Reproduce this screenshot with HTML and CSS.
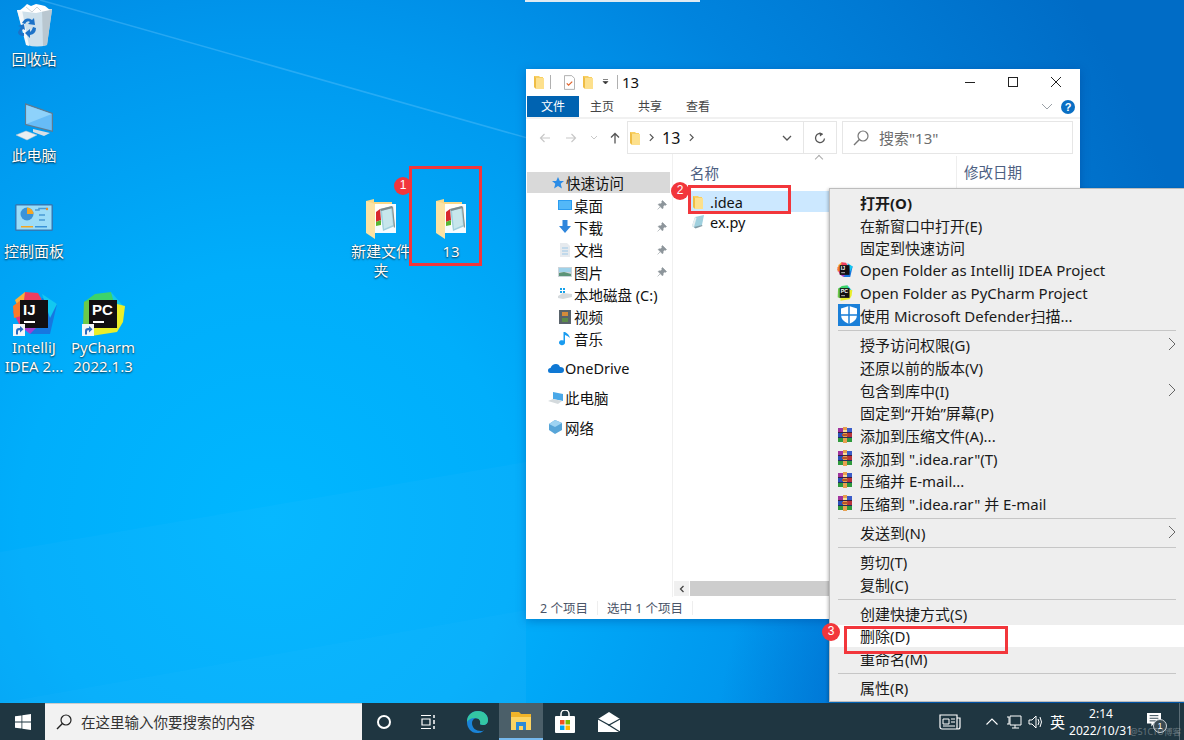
FILE: index.html
```html
<!DOCTYPE html>
<html lang="zh-CN">
<head>
<meta charset="utf-8">
<title>13</title>
<link rel="stylesheet" href="styles.css">
</head>
<body>
<svg class="defs" width="0" height="0" aria-hidden="true">
  <defs>
    <symbol id="folder" viewBox="0 0 10 14">
      <path d="M0 1h5l1 1h3v11H2l-2-1z" fill="#f8cf62"/>
      <path d="M2 3h8v11H2z" fill="#fde08c"/>
      <path d="M0 1l2 2v11l-2-2z" fill="#efbd45"/>
    </symbol>
    <symbol id="bigfolder" viewBox="0 0 30 40">
      <path d="M0 2l8-2v3h18v24H8L0 34z" fill="#f7d888"/>
      <path d="M0 2l9 3v35l-9-6z" fill="#fbe3a4"/>
      <path d="M9 5h21v29H9z" fill="#fff" opacity=".96"/>
      <path d="M14 10l12-3 3 20-12 5z" fill="#9fd0de"/>
      <path d="M16 12l9-3 2 17-9 4z" fill="#c7e6ec"/>
      <path d="M14 10l12-3 1 2-12 3z" fill="#7d8b8e"/>
      <path d="M27 7l2 21-1 1-2-20z" fill="#8a8f8b"/>
      <path d="M10 13l4-3 1 11-5 2z" fill="#d8262c"/>
      <path d="M10 23l5-2v5l-5 1z" fill="#58b432"/>
    </symbol>
    <symbol id="rar" viewBox="0 0 16 16">
      <rect x="1" y="1" width="14" height="4.500" fill="#a0329c"/>
      <rect x="9" y="1" width="6" height="4.500" fill="#3a5cc8"/>
      <rect x="1" y="6" width="14" height="4.500" fill="#2a50b8"/>
      <rect x="9" y="6" width="6" height="4.500" fill="#b8323a"/>
      <rect x="1" y="11" width="14" height="4" fill="#2f9a3c"/>
      <rect x="6" y="0" width="4" height="16" fill="#e8a050"/>
      <rect x="6" y="3" width="4" height="2" fill="#f6e09a"/>
      <rect x="5" y="7" width="6" height="2" fill="#b8542a"/>
      <rect x="1" y="5" width="14" height="1" fill="#3a2040"/>
      <rect x="1" y="10" width="14" height="1" fill="#22305a"/>
    </symbol>
    <symbol id="pin" viewBox="0 0 10 10">
      <path d="M5.500 .5l4 4-1 .8-.8-.4L6 6.500l.2 1.500-.8.8-4.200-4.200.8-.8 1.500.2L5.100 2.300l-.4-.8zM3 7L.6 9.400" fill="#8d959b" stroke="#8d959b" stroke-width=".6"/>
    </symbol>
    <symbol id="ij" viewBox="0 0 46 44">
      <path d="M1 20L10 8l20 0-8 32-14-6z" fill="#e8357b"/>
      <path d="M3 8L13 0l11 4-14 20z" fill="#fbb03b"/>
      <path d="M13 0l13 1 4 7H12z" fill="#ee3e5e"/>
      <path d="M1 14l8-6v16l-7 2z" fill="#fa7a2a"/>
      <path d="M30 6l15 6-7 30-20 0z" fill="#1777e0"/>
      <path d="M30 2l15 10-7 14z" fill="#12c8f0"/>
      <path d="M8 34l16 2-6 6z" fill="#a43fd0"/>
      <rect x="8" y="8" width="28" height="28" fill="#120f12"/>
      <rect x="12" y="29" width="11" height="2" fill="#fff"/>
      <text x="11" y="23" class="logo-text">IJ</text>
    </symbol>
    <symbol id="pc" viewBox="0 0 46 44">
      <path d="M3 10L14 2 30 0l4 10-24 10z" fill="#3dd36a"/>
      <path d="M2 34L3 10l7-2v30z" fill="#6cc94a"/>
      <path d="M30 0l14 16-8 6z" fill="#16c8e6"/>
      <path d="M36 12l8 2-2 16-6 10-26 4V34z" fill="#eaee2a"/>
      <rect x="8" y="8" width="28" height="28" fill="#120f12"/>
      <rect x="12" y="29" width="11" height="2" fill="#fff"/>
      <text x="11" y="23" class="logo-text">PC</text>
    </symbol>
    <symbol id="shortcut" viewBox="0 0 12 12">
      <rect width="12" height="12" fill="#f4f6f8"/>
      <path d="M3 10.500V7q0-3 3-3h1V2l3.500 3.300L7 8.500V6.300H6q-1 0-1 1.200v3z" fill="#2a6cc0"/>
    </symbol>
    <symbol id="chev" viewBox="0 0 8 14">
      <path d="M1 1l6 6-6 6" fill="none" stroke="#666" stroke-width="1"/>
    </symbol>
    <symbol id="mag" viewBox="0 0 16 16">
      <circle cx="10" cy="6" r="5" fill="none" stroke="currentColor" stroke-width="1.200"/>
      <path d="M6.400 9.600L1 15" stroke="currentColor" stroke-width="1.400"/>
    </symbol>
  </defs>
</svg>

<main class="desktop">
  <svg class="rays" viewBox="0 0 1184 703" preserveAspectRatio="none" aria-hidden="true">
    <path d="M40 0L1184 324" stroke="#7fd0ff" stroke-width="1.500" opacity=".3"/>
    <path d="M0 552L526 462V703H0z" fill="#fff" opacity=".025"/>
    <path d="M0 703L526 610V703z" fill="#fff" opacity=".02"/>
  </svg>
  <div class="topstrip"></div>

  <div class="dicon at-bin">
    <svg class="dsvg" viewBox="0 0 48 48">
      <path d="M7 8l35-1-5 36q-10 3-20 0z" fill="#dfe7ec" opacity=".92"/>
      <path d="M7 8l9 35 3 1L12 8z" fill="#f5f8fa"/>
      <path d="M32 8h10l-5 35-4 1z" fill="#b9c7d0"/>
      <path d="M9 9l5-4 3-3 4 2 5-2 5 1 4 1 5 4-14 3z" fill="#fff"/>
      <path d="M16 5l6 5 5-5 4 4" stroke="#cdd5da" fill="none"/>
      <g transform="translate(-6 -3)"><path d="M18 24q4-7 10-3l2-2 1 7-7-1 2-2q-3-2-5 2zM32 29q0 6-6 7v3l-5-5 5-4v3q2-1 3-5zM17 28l-3 5q0 4 6 4v-3q-3 0-3-1l2-3 2 1-1-6-6 2z" fill="#1c72c8"/></g>
    </svg>
    <span class="dlabel">回收站</span>
  </div>

  <div class="dicon at-pc">
    <svg class="dsvg" viewBox="0 0 48 48">
      <path d="M15 5l28 10v19l-28-7z" fill="#5d7b92"/>
      <path d="M16.200 7l25.600 9v16.500L16.200 26z" fill="#67bcf7"/>
      <path d="M16.200 7l25.600 9-25.600 10z" fill="#8ed2fb"/>
      <path d="M23 31l17 4-6 3-11-4z" fill="#d6dfe5"/>
      <path d="M6 37l10-4 11 4-10 5z" fill="#e9eef1" stroke="#bcc6cc" stroke-width=".5"/>
    </svg>
    <span class="dlabel">此电脑</span>
  </div>

  <div class="dicon at-cp">
    <svg class="dsvg" viewBox="0 0 48 48">
      <rect x="5" y="10" width="38" height="27" rx="1.500" fill="#2f7bb8"/>
      <rect x="6.500" y="11.500" width="35" height="24" fill="#9cdcf8"/>
      <circle cx="17" cy="20" r="6.500" fill="#3b93d8"/>
      <path d="M17 13.500a6.500 6.500 0 0 1 6.500 6.500H17z" fill="#f4a623"/>
      <rect x="11" y="32" width="12" height="1.500" fill="#f4a623"/>
      <rect x="25" y="32" width="12" height="1.500" fill="#3b93d8"/>
      <path d="M25 16h4v-1.500h9M29 21h6M29 26h6" stroke="#4a9ad4" stroke-width="1.500" fill="none"/>
      <circle cx="37" cy="15" r="1.200" fill="#f08a24"/>
    </svg>
    <span class="dlabel">控制面板</span>
  </div>

  <div class="dicon at-ij">
    <span class="dlogo">
      <svg class="dsvg"><use href="#ij" x="2" y="2" width="46" height="44"/></svg>
      <svg class="sc"><use href="#shortcut"/></svg>
    </span>
    <span class="dlabel">IntelliJ<br>IDEA 2...</span>
  </div>

  <div class="dicon at-py">
    <span class="dlogo">
      <svg class="dsvg"><use href="#pc" x="2" y="2" width="46" height="44"/></svg>
      <svg class="sc"><use href="#shortcut"/></svg>
    </span>
    <span class="dlabel">PyCharm<br>2022.1.3</span>
  </div>

  <div class="dicon at-new">
    <svg class="dsvg"><use href="#bigfolder" x="9" y="5" width="30" height="40"/></svg>
    <span class="dlabel">新建文件<br>夹</span>
  </div>

  <div class="dicon at-13">
    <svg class="dsvg"><use href="#bigfolder" x="9" y="5" width="30" height="40"/></svg>
    <span class="dlabel">13</span>
  </div>

  <section class="window">
    <header class="titlebar">
      <svg class="t-folder"><use href="#folder"/></svg>
      <i class="t-sep"></i>
      <svg class="t-note" viewBox="0 0 12 16"><path d="M.5.500h8l3 3v12H.5z" fill="#fff" stroke="#aaa"/><path d="M3 9l2 2 4-4" fill="none" stroke="#e0622a" stroke-width="1.300"/></svg>
      <svg class="t-folder t-folder2"><use href="#folder"/></svg>
      <svg class="t-drop" viewBox="0 0 7 6"><path d="M1 .5h5M1 2.500h5L3.500 5z" fill="#333" stroke="#333" stroke-width=".6"/></svg>
      <i class="t-sep t-sep2"></i>
      <span class="t-name">13</span>
      <div class="wctl">
        <svg viewBox="0 0 12 12"><path d="M1 6.500h10" stroke="#222"/></svg>
        <svg viewBox="0 0 12 12"><rect x="1.500" y="1.500" width="9" height="9" fill="none" stroke="#222"/></svg>
        <svg viewBox="0 0 12 12"><path d="M1 1l10 10M11 1L1 11" stroke="#222"/></svg>
      </div>
    </header>

    <nav class="ribbon">
      <span class="tab tab-file">文件</span>
      <span class="tab">主页</span>
      <span class="tab">共享</span>
      <span class="tab">查看</span>
      <svg class="rb-chev" viewBox="0 0 12 7"><path d="M1 1l5 5 5-5" fill="none" stroke="#9aa0a6"/></svg>
      <span class="help">?</span>
    </nav>

    <div class="addr">
      <svg class="a-btn" viewBox="0 0 12 12"><path d="M11 6H1.500M5.500 2l-4 4 4 4" fill="none" stroke="#c8c8c8" stroke-width="1.200"/></svg>
      <svg class="a-btn" viewBox="0 0 12 12"><path d="M1 6h9.500M6.500 2l4 4-4 4" fill="none" stroke="#c8c8c8" stroke-width="1.200"/></svg>
      <svg class="a-down" viewBox="0 0 8 5"><path d="M1 1l3 3 3-3" fill="none" stroke="#c8c8c8"/></svg>
      <svg class="a-up" viewBox="0 0 12 12"><path d="M6 11.500V1.500M2 5.500l4-4 4 4" fill="none" stroke="#555" stroke-width="1.300"/></svg>
      <div class="pathbox">
        <svg class="p-folder"><use href="#folder"/></svg>
        <svg class="p-gt" viewBox="0 0 6 10"><path d="M1 1l4 4-4 4" fill="none" stroke="#555" stroke-width="1.400"/></svg>
        <span class="p-name">13</span>
        <svg class="p-gt" viewBox="0 0 6 10"><path d="M1 1l4 4-4 4" fill="none" stroke="#555" stroke-width="1.400"/></svg>
        <svg class="p-chev" viewBox="0 0 10 6"><path d="M1 1l4 4 4-4" fill="none" stroke="#555" stroke-width="1.300"/></svg>
        <span class="p-refresh">
          <svg viewBox="0 0 14 14"><path d="M11.500 7.500a4.500 4.500 0 1 1-2-4.200" fill="none" stroke="#555" stroke-width="1.300"/><path d="M6.500 1l3.500 2.300L7 5.500z" fill="#555"/></svg>
        </span>
      </div>
      <div class="searchbox">
        <svg class="s-mag"><use href="#mag"/></svg>
        <span>搜索"13"</span>
      </div>
    </div>

    <div class="content">
      <aside class="navpane">
        <div class="nrow top active">
          <svg class="ni" viewBox="0 0 14 14"><path d="M7 1l1.800 4h4.200l-3.300 2.800 1.200 4.700L7 10l-3.900 2.500 1.200-4.700L1 5h4.200z" fill="#2b8ce6"/></svg>
          <span>快速访问</span>
        </div>
        <div class="nrow">
          <svg class="ni" viewBox="0 0 14 14"><rect x="0" y="2" width="14" height="10" fill="#2b9cf0"/><rect x="1" y="3" width="12" height="8" fill="#53b8f8"/></svg>
          <span>桌面</span><svg class="npin"><use href="#pin"/></svg>
        </div>
        <div class="nrow">
          <svg class="ni" viewBox="0 0 14 14"><path d="M4.500 0h5v6H13l-6 7-6-7h3.500z" fill="#2f86dc"/></svg>
          <span>下载</span><svg class="npin"><use href="#pin"/></svg>
        </div>
        <div class="nrow">
          <svg class="ni" viewBox="0 0 14 14"><path d="M2 0h7l3 3v11H2z" fill="#e6eaee"/><path d="M4 5h6M4 8h6M4 11h6" stroke="#9cc8e8"/></svg>
          <span>文档</span><svg class="npin"><use href="#pin"/></svg>
        </div>
        <div class="nrow">
          <svg class="ni" viewBox="0 0 14 14"><rect y="2" width="14" height="10" fill="#cbd4da"/><rect x="1" y="3" width="12" height="4" fill="#9fd2ea"/><path d="M1 11V8l5-1 7 2v2z" fill="#5c9478"/></svg>
          <span>图片</span><svg class="npin"><use href="#pin"/></svg>
        </div>
        <div class="nrow">
          <svg class="ni" viewBox="0 0 14 14"><path d="M0 9l5-3 9 1v3l-9 2-5-1z" fill="#d5dadd"/><path d="M2 1h2v2H2zM5 1h2v2H5zM2 4h2v2H2zM5 4h2v2H5z" fill="#16a1ea"/></svg>
          <span>本地磁盘 (C:)</span>
        </div>
        <div class="nrow">
          <svg class="ni" viewBox="0 0 14 14"><rect x="1" y="0" width="12" height="14" fill="#59636b"/><rect x="4" y="2" width="6" height="4" fill="#d58b3a"/><rect x="4" y="8" width="6" height="4" fill="#5c8c4a"/></svg>
          <span>视频</span>
        </div>
        <div class="nrow">
          <svg class="ni" viewBox="0 0 14 14"><path d="M7 0v10.500a3 2.500 0 1 1-1.500-2V0zM7 0q4 2 5 6-2-2-5-3z" fill="#1a9cf0"/></svg>
          <span>音乐</span>
        </div>
        <div class="nrow top group">
          <svg class="ni wide" viewBox="0 0 16 10"><path d="M2.500 10a2.500 2.500 0 0 1 0-5Q4 1 8 1q3 0 4 3 4 0 4 3t-3 3z" fill="#0f78d4"/></svg>
          <span>OneDrive</span>
        </div>
        <div class="nrow top group">
          <svg class="ni wide" viewBox="0 0 16 12"><path d="M5 0l10 2v7L5 7z" fill="#4aa8e8"/><path d="M0 9l5-2 9 2-4 3z" fill="#d4dadd"/></svg>
          <span>此电脑</span>
        </div>
        <div class="nrow top group">
          <svg class="ni wide" viewBox="0 0 16 14"><path d="M7 0l7 3v7l-7 4-6-4V4z" fill="#57a5d8"/><path d="M7 0l7 3-7 4-6-3z" fill="#9ed3f2"/></svg>
          <span>网络</span>
        </div>
      </aside>

      <div class="files">
        <div class="sortcaret"></div>
        <div class="fhead">
          <span class="c-name">名称</span>
          <span class="c-date">修改日期</span>
        </div>
        <div class="frow selected">
          <svg class="fi"><use href="#folder"/></svg>
          <span>.idea</span>
        </div>
        <div class="frow">
          <svg class="fi pyfile" viewBox="0 0 14 14"><path d="M1 11l3-9 9-2-2 10-7 3z" fill="#9fd0de"/><path d="M1 11l3-9 1.500 1L3 12z" fill="#e8eef0"/><path d="M3 12l8-2 .5 1-7 2.500z" fill="#7f9aa4"/></svg>
          <span>ex.py</span>
        </div>
        <div class="hscroll">
          <span class="hs-btn">
            <svg viewBox="0 0 6 8"><path d="M4.500 1L1.500 4l3 3" fill="none" stroke="#444" stroke-width="1.300"/></svg>
          </span>
          <span class="hs-thumb"></span>
        </div>
      </div>
    </div>

    <footer class="status">
      <span>2 个项目</span><i></i><span>选中 1 个项目</span><i></i>
    </footer>
  </section>

  <ul class="menu">
    <li class="mi bold">打开(O)</li>
    <li class="mi">在新窗口中打开(E)</li>
    <li class="mi">固定到快速访问</li>
    <li class="mi"><svg class="mic"><use href="#ij"/></svg>Open Folder as IntelliJ IDEA Project</li>
    <li class="mi"><svg class="mic"><use href="#pc"/></svg>Open Folder as PyCharm Project</li>
    <li class="mi"><svg class="mic-def" viewBox="0 0 22 22"><rect width="22" height="22" fill="#1a7fd8"/><path d="M11 2l8 2.500V11q0 6-8 9-8-3-8-9V4.500z" fill="#fff"/><path d="M11 2v18M3 11h16" stroke="#1a7fd8" stroke-width="1.500"/></svg>使用 Microsoft Defender扫描...</li>
    <li class="sep"></li>
    <li class="mi">授予访问权限(G)<svg class="arrow"><use href="#chev"/></svg></li>
    <li class="mi">还原以前的版本(V)</li>
    <li class="mi">包含到库中(I)<svg class="arrow"><use href="#chev"/></svg></li>
    <li class="mi">固定到“开始”屏幕(P)</li>
    <li class="mi"><svg class="mic"><use href="#rar"/></svg>添加到压缩文件(A)...</li>
    <li class="mi"><svg class="mic"><use href="#rar"/></svg>添加到 ".idea.rar"(T)</li>
    <li class="mi"><svg class="mic"><use href="#rar"/></svg>压缩并 E-mail...</li>
    <li class="mi"><svg class="mic"><use href="#rar"/></svg>压缩到 ".idea.rar" 并 E-mail</li>
    <li class="sep"></li>
    <li class="mi">发送到(N)<svg class="arrow"><use href="#chev"/></svg></li>
    <li class="sep"></li>
    <li class="mi">剪切(T)</li>
    <li class="mi">复制(C)</li>
    <li class="sep"></li>
    <li class="mi">创建快捷方式(S)</li>
    <li class="mi hover">删除(D)</li>
    <li class="mi">重命名(M)</li>
    <li class="sep"></li>
    <li class="mi">属性(R)</li>
  </ul>

  <div class="redbox box1"></div>
  <div class="redbox box2"></div>
  <div class="redbox box3"></div>
  <span class="badge b1">1</span>
  <span class="badge b2">2</span>
  <span class="badge b3">3</span>
</main>

<footer class="taskbar">
  <span class="start">
    <svg viewBox="0 0 16 16"><path d="M0 2.300l6.500-.9v6.200H0zM7.300 1.300L16 0v7.600H7.300zM0 8.400h6.500v6.200L0 13.700zM7.300 8.400H16V16l-8.700-1.300z" fill="#fff"/></svg>
  </span>
  <div class="tsearch">
    <svg class="ts-mag"><use href="#mag"/></svg>
    <span>在这里输入你要搜索的内容</span>
  </div>
  <span class="tbtn"><svg viewBox="0 0 16 16"><circle cx="8" cy="8" r="6" fill="none" stroke="#fff" stroke-width="2"/></svg></span>
  <span class="tbtn"><svg viewBox="0 0 16 16"><path d="M1 1.500h10M1 14.500h10M2 5h8v6H2z" fill="none" stroke="#fff" stroke-width="1.200"/><path d="M14 1v3M14 6v4M14 12v3" stroke="#fff" stroke-width="1.500"/></svg></span>
  <span class="tbtn edge"><svg class="big" viewBox="0 0 24 24">
    <path d="M2 12C2 5 7 1 13 1c6 0 10 4 10 9 0 3-2 5-5 5-2 0-3-1-3-1 1-1 1-4-1-5-3-2-7 0-7 4 0 5 4 8 9 8 1 0 2 0 3-1-2 3-5 3-7 3C6 23 2 18 2 12z" fill="#1a84d8"/>
    <path d="M2 12C2 5 7 1 13 1c6 0 10 4 10 9 0 3-2 5-5 5-2 0-3-1-3-1 1-3-1-6-5-6-4 0-7 2-8 4z" fill="#34c7a4"/>
  </svg></span>
  <span class="tbtn active"><svg class="big" viewBox="0 0 24 24">
    <path d="M2 3h8l2 2h10v16H2z" fill="#f0b429"/><path d="M2 8h20v13H2z" fill="#fcd462"/><path d="M7 13h10v8h-3v-4h-4v4H7z" fill="#2a8ad8"/>
  </svg></span>
  <span class="tbtn"><svg class="big" viewBox="0 0 24 24">
    <path d="M8 6V4a4 4 0 0 1 8 0v2" fill="none" stroke="#fff" stroke-width="1.500"/><rect x="2" y="6" width="20" height="17" rx="1" fill="#fff"/>
    <rect x="7" y="10" width="4.500" height="4.500" fill="#f25022"/><rect x="12.500" y="10" width="4.500" height="4.500" fill="#7fba00"/><rect x="7" y="15.500" width="4.500" height="4.500" fill="#00a4ef"/><rect x="12.500" y="15.500" width="4.500" height="4.500" fill="#ffb900"/>
  </svg></span>
  <span class="tbtn"><svg class="big" viewBox="0 0 24 24">
    <path d="M1 9l11-7 11 7v13H1z" fill="#fff"/><path d="M1 9l11 6 11-6" fill="none" stroke="#1e3540" stroke-width="1.300"/><path d="M23 22L11 14.500" stroke="#1e3540" stroke-width="1.300"/>
  </svg></span>

  <div class="tray">
    <span class="tr tr-news"><svg viewBox="0 0 22 16"><path d="M1 1h17v14H3a2 2 0 0 1-2-2zM18 4h3v9a2 2 0 0 1-2 2h-1" fill="none" stroke="#fff" stroke-width="1.200"/><path d="M4 5h6v5H4zM12 5h4M12 8h4M4 12h12" fill="none" stroke="#fff"/></svg></span>
    <span class="tr tr-s"><svg viewBox="0 0 12 7"><path d="M.5 6.500L6 1l5.500 5.500" fill="none" stroke="#fff" stroke-width="1.100"/></svg></span>
    <span class="tr tr-i"><svg viewBox="0 0 16 16"><path d="M4 2h11v9H4zM9 11v3M6 14h7M1 3h2v7H1" fill="none" stroke="#fff"/></svg></span>
    <span class="tr tr-i"><svg viewBox="0 0 16 16"><path d="M1 6h3l4-4v12l-4-4H1z" fill="none" stroke="#fff"/><path d="M10 5q2 3 0 6M12 3q3 5 0 10" fill="none" stroke="#fff"/></svg></span>
    <span class="tr tr-lang">英</span>
    <div class="clock"><span>2:14</span><span>2022/10/31</span></div>
    <span class="tr tr-notif">
      <svg viewBox="0 0 16 16"><path d="M0 0h16v12H8l-3 3.500V12H0z" fill="#fff"/><path d="M3 3h10M3 6h10M3 9h7" stroke="#1e3540"/></svg>
      <b class="ncount">1</b>
    </span>
    <i class="showdesk"></i>
  </div>
  <span class="watermark">@51CTO博客</span>
</footer>
</body>
</html>
```

FILE: styles.css
```css
* { box-sizing: border-box; }
html, body { margin: 0; height: 100%; }
body {
  width: 1184px; height: 740px; overflow: hidden;
  display: flex; flex-direction: column;
  font-family: "Noto Sans", "Noto Sans CJK SC", sans-serif;
  font-size: 15px; color: #1a1a1a;
}
.defs { position: absolute; }
.logo-text { font: 700 15px "Liberation Sans", sans-serif; fill: #fff; }

.desktop {
  flex: 1; position: relative; overflow: hidden;
  background:
    radial-gradient(circle 280px at 1000px 720px, rgba(0,72,180,.6) 0, rgba(0,72,180,.4) 45%, rgba(0,72,180,0) 100%),
    radial-gradient(circle 960px at 270px 520px, #00b7ff 0, #00aefb 26%, #0098ee 50%, #0084de 68%, #006cc6 100%);
}
.rays { position: absolute; inset: 0; width: 100%; height: 100%; }
.topstrip { position: absolute; left: 525px; top: 0; width: 175px; height: 2px; background: #dfeaf2; }

.dicon {
  position: absolute; width: 68px;
  display: flex; flex-direction: column; align-items: center;
  color: #fff; text-align: center;
}
.dsvg { width: 48px; height: 48px; display: block; }
.dlabel {
  line-height: 19px; font-size: 15px; white-space: nowrap;
  text-shadow: 0 1px 2px rgba(0,0,0,.7), 0 0 1px rgba(0,0,0,.4);
}
.dlogo { position: relative; width: 48px; height: 48px; }
.sc { position: absolute; left: 3px; bottom: 2px; width: 12px; height: 12px; }
.at-bin { left: 0; top: 2px; }
.at-pc { left: 0; top: 98px; }
.at-cp { left: 0; top: 194px; }
.at-ij { left: 0; top: 290px; }
.at-py { left: 69px; top: 290px; }
.at-new { left: 347px; top: 194px; }
.at-13 { left: 417px; top: 194px; }

.window {
  position: absolute; left: 526px; top: 69px; width: 554px; height: 550px;
  background: #fff; display: flex; flex-direction: column;
  box-shadow: 0 2px 9px rgba(0,50,130,.35);
}
.titlebar { height: 27px; padding-bottom: 1px; display: flex; align-items: center; flex: none; }
.t-folder { width: 10px; height: 14px; margin-left: 8px; }
.t-folder2 { margin-left: 8px; }
.t-sep { width: 1px; height: 14px; background: #b0b0b0; margin-left: 6px; }
.t-sep2 { margin-left: 8px; }
.t-note { width: 11px; height: 15px; margin-left: 13px; }
.t-drop { width: 7px; height: 6px; margin-left: 9px; }
.t-name { margin-left: 4px; font-size: 15px; color: #111; }
.wctl { margin-left: auto; display: flex; }
.wctl svg { width: 12px; height: 12px; margin: 0 15.500px; }
.wctl svg:last-child { margin-right: 18px; }

.ribbon {
  height: 23px; flex: none; display: flex; align-items: center;
  padding-left: 1px; border-bottom: 2px solid #f1f1f1; font-size: 12px; color: #444;
}
.tab { width: 48px; text-align: center; line-height: 23px; }
.tab-file { width: 52px; height: 21px; line-height: 21px; background: #0063b1; color: #fff; margin-right: -1px; }
.ribbon .rb-chev { width: 12px; height: 7px; margin-left: auto; }
.help {
  width: 14px; height: 14px; border-radius: 50%; background: #0a6fc4; color: #fff;
  font: 700 11px/14px "Liberation Sans", sans-serif; text-align: center;
  margin: 0 5px 0 8px;
}

.addr { height: 33px; margin-top: 2px; flex: none; display: flex; align-items: center; padding-left: 13px; }
.a-btn { width: 12px; height: 12px; margin-right: 14px; }
.a-down { width: 8px; height: 5px; margin-right: 11px; margin-left: -1px; }
.a-up { width: 12px; height: 12px; margin-right: 6px; }
.pathbox {
  width: 210px; height: 33px; border: 1px solid #e6e6e6; display: flex; align-items: center;
  font-size: 16px; color: #111;
}
.p-folder { width: 10px; height: 14px; margin-left: 2px; }
.p-gt { width: 5px; height: 9px; margin: 0 8.500px; flex: none; }
.p-name { line-height: 1; }
.p-chev { width: 10px; height: 6px; margin-left: auto; margin-right: 11px; }
.p-refresh {
  width: 33px; height: 31px; border-left: 1px solid #e6e6e6;
  display: flex; align-items: center; justify-content: center;
}
.p-refresh svg { width: 14px; height: 14px; }
.searchbox {
  width: 231px; height: 33px; margin-left: 5px; border: 1px solid #e6e6e6;
  display: flex; align-items: center; color: #6d6d6d; font-size: 15px;
}
.s-mag { width: 16px; height: 16px; margin: 0 10px 0 10px; color: #777; }

.content { flex: 1; display: flex; min-height: 0; }
.navpane { width: 147px; flex: none; padding: 18px 2px 0 1px; border-right: 1px solid #f0f0f0; }
.nrow { height: 22.300px; display: flex; align-items: center; padding-left: 32px; font-size: 14.500px; color: #111; }
.nrow.top { padding-left: 25px; }
.nrow.active { background: #d9d9d9; height: 21px; margin-bottom: 1px; }
.nrow.group { margin-top: 7.200px; padding-left: 22px; }
.ni { width: 14px; height: 14px; margin-right: 2px; margin-left: -1px; flex: none; }
.nrow.top .ni { margin-right: 1px; }
.ni.wide { width: 16px; margin-right: 4px; }
.npin { width: 10px; height: 10px; margin-left: auto; margin-right: 3px; }

.files { flex: 1; position: relative; display: flex; flex-direction: column; }
.fhead { height: 37px; flex: none; display: flex; align-items: center; color: #4d6082; font-size: 14.500px; padding-left: 17px; }
.c-date { margin-left: 237px; padding-left: 7px; border-left: 1px solid #eee; line-height: 33px; }
.sortcaret {
  position: absolute; left: 143px; top: 2px; width: 6px; height: 6px;
  border-left: 1px solid #aaa; border-top: 1px solid #aaa; transform: rotate(45deg);
}
.frow { height: 20px; flex: none; display: flex; align-items: center; padding-left: 18px; font-size: 14.500px; color: #111; }
.selected { height: 21px; background: #cce8ff; margin-left: 16px; padding-left: 4px; }
.fi { width: 10px; height: 14px; margin-right: 7px; flex: none; }
.pyfile { width: 14px; height: 14px; margin-right: 5px; }
.hscroll { margin-top: auto; margin-bottom: 1px; height: 15px; display: flex; margin-left: 1px; }
.hs-btn { width: 15px; background: #f0f0f0; display: flex; align-items: center; justify-content: center; }
.hs-btn svg { width: 6px; height: 8px; }
.hs-thumb { flex: 1; background: #cdcdcd; margin-left: 1px; }

.status { height: 22px; flex: none; display: flex; align-items: center; padding: 0 0 1px 14px; font-size: 12.500px; color: #4a5568; }
.status i { width: 1px; height: 14px; background: #eee; margin: 0 9px; }

.menu {
  list-style: none; margin: 0; padding: 2px 0 0;
  position: absolute; left: 829px; top: 188px; width: 355px; height: 514px;
  background: #eee; border: 1px solid #bdbdbd; border-right: 0;
  box-shadow: -1px 1px 3px rgba(0,0,0,.25);
}
.mi {
  height: 22.680px; display: flex; align-items: center; padding-left: 30px;
  position: relative; font-size: 15px; color: #1a1a1a; white-space: pre;
}
.bold { font-weight: 700; }
.hover { background: #fff; }
.sep { height: 6.400px; margin: 0 8px; position: relative; }
.sep::after { content: ""; display: block; position: relative; top: 3px; height: 1px; background: #c6c6c6; }
.mic { position: absolute; left: 7px; top: 3px; width: 16px; height: 16px; }
.mic-def { position: absolute; left: 8px; top: 0; width: 22px; height: 22px; }
.arrow { position: absolute; right: 8px; top: 4px; width: 8px; height: 14px; }

.redbox { position: absolute; border: 3px solid #f2363b; }
.box1 { left: 409px; top: 166px; width: 73px; height: 100px; }
.box2 { left: 688px; top: 185px; width: 103px; height: 29px; }
.box3 { left: 844px; top: 626px; width: 164px; height: 28px; }
.badge {
  position: absolute; width: 18px; height: 18px; border-radius: 50%;
  background: #f2363b; color: #fff; font: 400 12px/17px "Liberation Sans", sans-serif; text-align: center;
}
.b1 { left: 394px; top: 177px; }
.b2 { left: 671px; top: 182px; }
.b3 { left: 822px; top: 623px; }

.taskbar {
  height: 37px; flex: none; display: flex; align-items: stretch; position: relative;
  background: #1f3641; color: #fff;
}
.start { width: 45px; display: flex; align-items: center; justify-content: center; }
.start svg { width: 16px; height: 16px; }
.tsearch {
  width: 317px; background: #f2f2f2; color: #333; display: flex; align-items: center;
  font-size: 14.500px; padding: 0 0 1px 11px; border-top: 1px solid #ccc;
}
.ts-mag { width: 16px; height: 16px; margin-right: 9px; color: #222; }
.tbtn { width: 44px; display: flex; align-items: center; justify-content: center; }
.tbtn svg { width: 16px; height: 16px; }
.tbtn svg.big { width: 24px; height: 24px; }
.tbtn.edge { margin-left: 5px; }
.tbtn.active { background: #4b5f69; border-bottom: 2px solid #76b9ed; }
.tray { margin-left: auto; display: flex; align-items: center; }
.tr { display: flex; align-items: center; justify-content: center; }
.tr-news { width: 40px; }
.tr-news svg { width: 22px; height: 16px; }
.tr-s { width: 22px; margin-left: 11px; }
.tr-s svg { width: 12px; height: 7px; }
.tr-i { width: 22px; }
.tr-i svg { width: 16px; height: 16px; }
.tr-lang { width: 21px; font-size: 15px; }
.clock { width: 66px; display: flex; flex-direction: column; align-items: center; padding-top: 1px; font-size: 12px; line-height: 17px; white-space: nowrap; }
.tr-notif { width: 40px; height: 37px; position: relative; }
.tr-notif svg { width: 14px; height: 14px; margin-top: -4px; margin-right: 1px; }
.ncount {
  position: absolute; left: 19px; top: 16px; width: 14px; height: 14px; border-radius: 50%;
  background: #3a4a52; border: 1px solid #cfd6da; font: 400 9px/12px "Liberation Sans", sans-serif; text-align: center;
}
.showdesk { width: 1px; height: 37px; background: #5b6d76; margin: 0 4px 0 5px; }
.watermark {
  position: absolute; right: 3px; bottom: 3px; font-size: 8.500px; color: #fff; opacity: .3; white-space: nowrap;
}
```
